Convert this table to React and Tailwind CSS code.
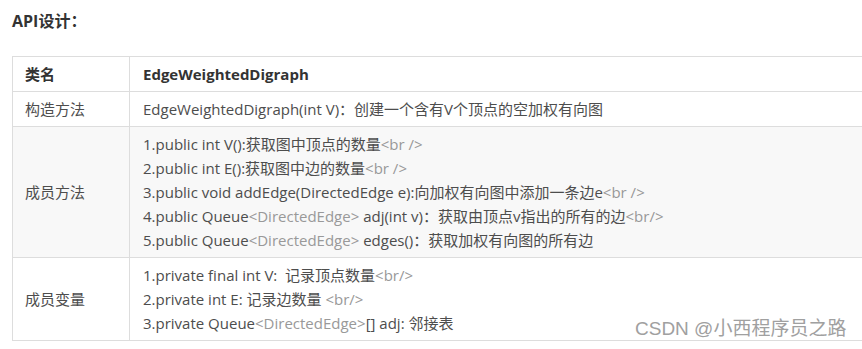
import React from "react";

const G = ({ children }) => <span className="text-[#999999]">{children}</span>;

export default function App() {
  const font = { fontFamily: '"Open Sans", "Noto Sans CJK SC", sans-serif' };
  return (
    <div className="relative w-[862px] h-[349px] overflow-hidden bg-white text-[15px] text-[#4d4d4d]" style={font}>
      <div className="pl-3 pt-[9px] leading-6 text-[16px] font-bold text-[#333333]">API设计：</div>
      <div className="pl-3 pt-[23px]">
        <table className="w-[900px] border-collapse leading-6">
          <tbody>
            <tr>
              <td className="w-[117px] border border-[#dddddd] px-[12px] py-[5px] font-bold text-[#333333]">类名</td>
              <td className="border border-[#dddddd] px-[13px] py-[5px] font-bold text-[#333333]">EdgeWeightedDigraph</td>
            </tr>
            <tr>
              <td className="border border-[#dddddd] px-[12px] py-[5px]">构造方法</td>
              <td className="border border-[#dddddd] px-[13px] py-[5px]">EdgeWeightedDigraph(int V)：创建一个含有V个顶点的空加权有向图</td>
            </tr>
            <tr className="bg-[#f8f8f8]">
              <td className="border border-[#dddddd] px-[12px] py-[5px]">成员方法</td>
              <td className="border border-[#dddddd] px-[13px] py-[5px]">
                <div>1.public int V():获取图中顶点的数量<G>&lt;br /&gt;</G></div>
                <div>2.public int E():获取图中边的数量<G>&lt;br /&gt;</G></div>
                <div>3.public void addEdge(DirectedEdge e):向加权有向图中添加一条边e<G>&lt;br /&gt;</G></div>
                <div>4.public Queue<G>&lt;DirectedEdge&gt;</G> adj(int v)：获取由顶点v指出的所有的边<G>&lt;br/&gt;</G></div>
                <div>5.public Queue<G>&lt;DirectedEdge&gt;</G> edges()：获取加权有向图的所有边</div>
              </td>
            </tr>
            <tr>
              <td className="border border-[#dddddd] px-[12px] py-[5px]">成员变量</td>
              <td className="border border-[#dddddd] px-[13px] py-[5px]">
                <div>1.private final int V:&nbsp; 记录顶点数量<G>&lt;br/&gt;</G></div>
                <div>2.private int E: 记录边数量 <G>&lt;br/&gt;</G></div>
                <div>3.private Queue<G>&lt;DirectedEdge&gt;</G>[] adj: 邻接表</div>
              </td>
            </tr>
          </tbody>
        </table>
      </div>
      <div
        className="absolute left-[635px] top-[317px] text-[19px] leading-6 text-[#a0a0a0] whitespace-nowrap"
        style={{ fontFamily: '"Liberation Sans", "Noto Sans CJK SC", sans-serif', textShadow: "0 0 1px #ffffff" }}
      >
        CSDN @小西程序员之路
      </div>
    </div>
  );
}
